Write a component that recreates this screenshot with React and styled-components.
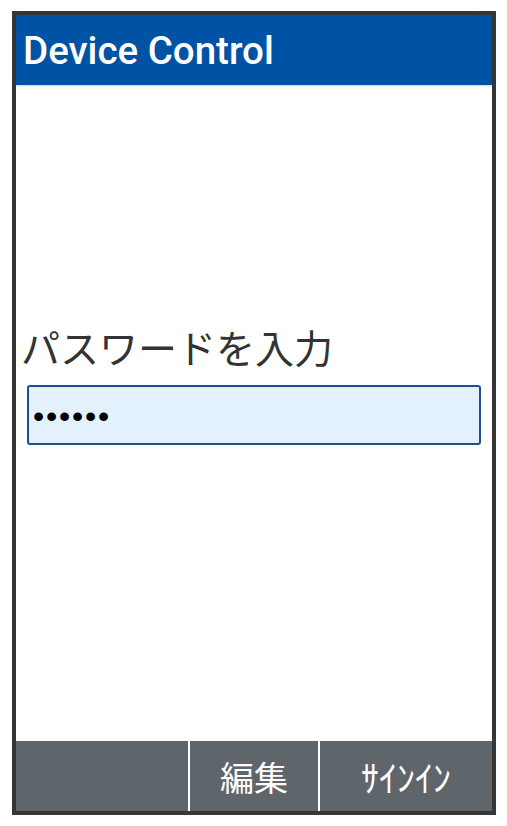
import React from "react";
import styled, { createGlobalStyle } from "styled-components";

const Global = createGlobalStyle`
  body {
    margin: 0;
    background: #fff;
    font-family: Roboto, "Noto Sans CJK JP", sans-serif;
  }
`;

const Frame = styled.div`
  margin: 11px 0 0 12px;
  width: 484px;
  height: 804px;
  box-sizing: border-box;
  border: 4px solid #363636;
  display: flex;
  flex-direction: column;
  background: #fff;
`;

const Header = styled.header`
  height: 70px;
  flex: none;
  background: #0052a5;
  box-shadow: 0 1px 2px rgba(0, 0, 0, 0.18);
  display: flex;
  align-items: center;
  padding-left: 7px;
`;

const Title = styled.h1`
  margin: 0;
  color: #fff;
  font-family: Roboto, sans-serif;
  font-weight: 500;
  font-size: 38.5px;
`;

const Main = styled.main`
  flex: 1;
  display: flex;
  flex-direction: column;
  padding-top: 238px;
`;

const Label = styled.div`
  padding-left: 5px;
  font-family: "Noto Sans CJK JP", sans-serif;
  font-size: 39px;
  line-height: 46px;
  color: #333;
`;

const Field = styled.div`
  margin: 16px 11px 0 11px;
  height: 60px;
  box-sizing: border-box;
  border: 2px solid #1d4f95;
  border-radius: 3px;
  background: #e3f1fd;
  display: flex;
  align-items: center;
  padding: 3px 0 0 4px;
`;

const Dots = styled.span`
  font-family: "Liberation Sans", sans-serif;
  font-size: 32px;
  letter-spacing: 1.8px;
  color: #000;
`;

const Footer = styled.footer`
  height: 70px;
  flex: none;
  background: #5f666b;
  display: grid;
  grid-template-columns: 172px 130px 1fr;
`;

const SoftKey = styled.div`
  display: flex;
  align-items: center;
  justify-content: center;
  color: #fff;
  font-family: "Noto Sans CJK JP", sans-serif;
  font-size: ${(p) => p.size || 34}px;
  border-left: ${(p) => (p.divider ? "2px solid #fff" : "none")};
`;

export default function App() {
  return (
    <>
      <Global />
      <Frame>
        <Header>
          <Title>Device Control</Title>
        </Header>
        <Main>
          <Label>パスワードを入力</Label>
          <Field>
            <Dots>••••••</Dots>
          </Field>
        </Main>
        <Footer>
          <SoftKey />
          <SoftKey divider>編集</SoftKey>
          <SoftKey divider size={36}>ｻｲﾝｲﾝ</SoftKey>
        </Footer>
      </Frame>
    </>
  );
}
